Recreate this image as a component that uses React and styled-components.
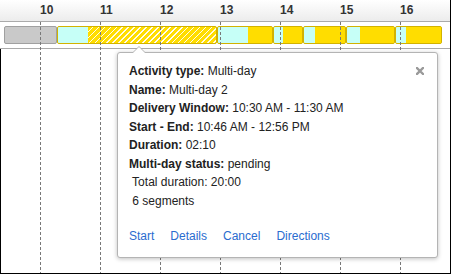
import React from "react";
import styled, { createGlobalStyle } from "styled-components";

const GlobalStyle = createGlobalStyle`
  html, body {
    margin: 0;
    padding: 0;
    background: #fff;
  }
  body {
    font-family: "Liberation Sans", Arial, sans-serif;
    font-size: 12px;
    color: #222;
  }
`;

const HOURS = [10, 11, 12, 13, 14, 15, 16];

// width of each block, and how much of it is "travel" (cyan)
const BLOCKS = [
  { kind: "idle", width: 53 },
  { kind: "hatched", width: 160, lead: 30 },
  { kind: "work", width: 56, lead: 30 },
  { kind: "work", width: 30, lead: 9 },
  { kind: "work", width: 43, lead: 11 },
  { kind: "work", width: 49, lead: 13 },
  { kind: "work", width: 47, lead: 10 },
];

const Frame = styled.div`
  position: relative;
  width: 451px;
  height: 274px;
  box-sizing: border-box;
  border-right: 1px solid #000;
  border-bottom: 1px solid #000;
  overflow: hidden;
  display: flex;
  flex-direction: column;
`;

const Header = styled.div`
  display: flex;
  height: 21px;
  padding-left: 40px;
  border-bottom: 1px solid #aaa;
  background: linear-gradient(to bottom, #ffffff, #ececec);
  flex-shrink: 0;
`;

const HourLabel = styled.div`
  width: 60px;
  flex-shrink: 0;
  line-height: 21px;
  font-weight: bold;
  font-size: 12px;
  color: #333;
`;

const Row = styled.div`
  display: flex;
  align-items: center;
  height: 26px;
  padding-left: 4px;
  border-bottom: 1px solid #aaa;
  flex-shrink: 0;
`;

const Block = styled.div`
  display: flex;
  height: 18px;
  box-sizing: border-box;
  border-radius: 2px;
  overflow: hidden;
  flex-shrink: 0;
  border: 1px solid ${(p) => (p.$kind === "idle" ? "#a0a0a0" : "#d2b200")};
  background: ${(p) => (p.$kind === "idle" ? "#c9c9c9" : "#ffdd00")};
`;

const Travel = styled.div`
  background: #c6fff7;
  flex-shrink: 0;
`;

const Work = styled.div`
  flex: 1;
  background: ${(p) =>
    p.$hatched
      ? "repeating-linear-gradient(135deg, #ffdd00 0px, #ffdd00 3px, #fff8d0 3px, #ffffff 4.2px)"
      : "#ffdd00"};
`;

const Body = styled.div`
  flex: 1;
  border-left: 1px solid #000;
`;

const Grid = styled.div`
  position: absolute;
  top: 22px;
  left: 0;
  bottom: 0;
  display: flex;
  padding-left: 40px;
  pointer-events: none;
`;

const GridLine = styled.div`
  width: 60px;
  flex-shrink: 0;
  background: linear-gradient(to bottom, #787878 60%, transparent 60%) 0 0 / 1px 5px repeat-y;
`;

const Popup = styled.div`
  position: absolute;
  left: 117px;
  top: 52px;
  width: 321px;
  box-sizing: border-box;
  padding: 9px 11px 12px 11px;
  background: #fff;
  border: 1px solid #b4b4b4;
  border-radius: 3px;
  box-shadow: 0 1px 4px rgba(0, 0, 0, 0.25);

  &::before,
  &::after {
    content: "";
    position: absolute;
    left: 14px;
    border-left: 7px solid transparent;
    border-right: 7px solid transparent;
  }
  &::before {
    top: -7px;
    border-bottom: 7px solid #b4b4b4;
  }
  &::after {
    top: -6px;
    border-bottom: 7px solid #fff;
  }
`;

const Close = styled.svg`
  position: absolute;
  top: 14px;
  right: 13px;
  width: 8px;
  height: 8px;
`;

const Line = styled.div`
  line-height: 18.5px;
  white-space: pre;

  b {
    font-weight: bold;
  }
`;

const Links = styled.div`
  display: flex;
  gap: 16px;
  margin-top: 17px;
  line-height: 18px;
`;

const Link = styled.a`
  color: #2a6ccf;
  text-decoration: none;
  cursor: pointer;
`;

const DETAILS = [
  ["Activity type:", "Multi-day"],
  ["Name:", "Multi-day 2"],
  ["Delivery Window:", "10:30 AM - 11:30 AM"],
  ["Start - End:", "10:46 AM - 12:56 PM"],
  ["Duration:", "02:10"],
  ["Multi-day status:", "pending"],
];

export default function App() {
  return (
    <>
      <GlobalStyle />
      <Frame>
        <Header>
          {HOURS.map((h) => (
            <HourLabel key={h}>{h}</HourLabel>
          ))}
        </Header>
        <Row>
          {BLOCKS.map((b, i) => (
            <Block key={i} $kind={b.kind} style={{ width: b.width }}>
              {b.kind !== "idle" && (
                <>
                  <Travel style={{ width: b.lead }} />
                  <Work $hatched={b.kind === "hatched"} />
                </>
              )}
            </Block>
          ))}
        </Row>
        <Body />
        <Grid>
          {HOURS.map((h) => (
            <GridLine key={h} />
          ))}
        </Grid>
        <Popup>
          <Close viewBox="0 0 8 8">
            <path d="M1 1 L7 7 M7 1 L1 7" stroke="#9a9a9a" strokeWidth="2.4" strokeLinecap="square" />
          </Close>
          {DETAILS.map(([label, value]) => (
            <Line key={label}>
              <b>{label}</b> {value}
            </Line>
          ))}
          <Line>{" Total duration: 20:00"}</Line>
          <Line>{" 6 segments"}</Line>
          <Links>
            <Link>Start</Link>
            <Link>Details</Link>
            <Link>Cancel</Link>
            <Link>Directions</Link>
          </Links>
        </Popup>
      </Frame>
    </>
  );
}
